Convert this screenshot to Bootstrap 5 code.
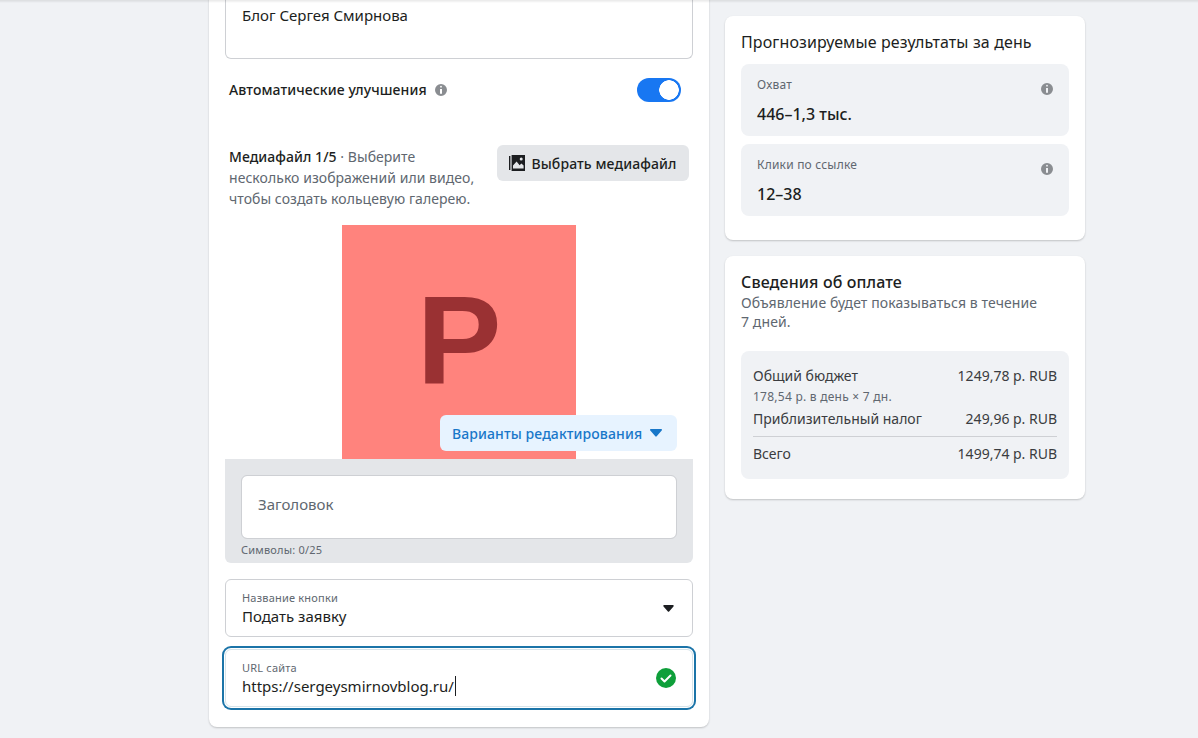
<!DOCTYPE html>
<html lang="ru">
<head>
    <meta charset="UTF-8">
    <title>Объявление</title>
    <link rel="stylesheet" href="https://cdn.jsdelivr.net/npm/bootstrap@5.3.0/dist/css/bootstrap.min.css">
    <style>
        html, body {
            height: 738px;
            overflow: hidden;
        }
        body {
            background: #f0f2f5;
            color: #1c1e21;
            font-family: "Noto Sans", "Open Sans", sans-serif;
            font-size: 14px;
            line-height: 20px;
        }
        .top-shade {
            position: fixed;
            top: 0;
            left: 0;
            right: 0;
            height: 3px;
            background: linear-gradient(rgba(0,0,0,.09), rgba(0,0,0,0));
            z-index: 5;
        }
        .page-wrap {
            display: flex;
            align-items: flex-start;
            gap: 16px;
            padding-left: 209px;
        }
        .panel {
            background: #fff;
            border-radius: 8px;
            box-shadow: 0 1px 2px rgba(0,0,0,.2);
        }
        .panel-main {
            width: 500px;
            height: 767px;
            margin-top: -40px;
            padding: 0 16px;
            flex: none;
        }
        .side-col {
            width: 360px;
            padding-top: 16px;
            flex: none;
        }
        .field-box {
            border: 1px solid #ced0d4;
            border-radius: 6px;
            padding: 0 16px;
            background: #fff;
            color: #1c1e21;
        }
        .name-box {
            height: 59px;
            margin-top: 40px;
            padding-top: 3px;
            font-size: 15px;
            line-height: 24px;
            border-top: 0;
            border-radius: 0 0 6px 6px;
        }
        .auto-row {
            height: 24px;
            margin: 19px 12px 0 4px;
        }
        .auto-title {
            font-weight: 500;
            font-size: 14px;
            letter-spacing: .1px;
        }
        .info-ico {
            width: 12px;
            height: 12px;
            fill: #8a8d91;
            flex: none;
        }
        .switch-big {
            width: 44px !important;
            height: 24px;
            margin: 0 !important;
            float: none !important;
            border: 0;
            background-color: #1877f2 !important;
            background-image: radial-gradient(circle 10px at 32px 12px, #fff 95%, transparent 100%) !important;
            background-size: 100% 100% !important;
            background-position: 0 0 !important;
            box-shadow: none !important;
        }
        .media-row {
            margin: 43px 4px 0 4px;
        }
        .media-note {
            width: 250px;
            color: #606770;
            line-height: 21px;
            padding-top: 1px;
            letter-spacing: .05px;
        }
        .media-note b {
            color: #1c1e21;
            font-weight: 500;
        }
        .btn-media {
            width: 192px;
            height: 36px;
            padding: 0;
            border: 0;
            border-radius: 6px;
            background: #e4e6e9;
            color: #1c1e21;
            font-size: 14px;
            font-weight: 500;
            letter-spacing: .1px;
            gap: 6px;
        }
        .media-ico {
            width: 16px;
            height: 16px;
            fill: #1c1e21;
        }
        .preview-wrap {
            position: relative;
            height: 234px;
            margin-top: 16px;
        }
        .preview-pic {
            display: block;
            width: 234px;
            height: 234px;
            margin: 0 auto;
            background: #ff837d;
            color: #9a3133;
            font: 700 127px/230px "Liberation Sans", sans-serif;
            text-align: center;
        }
        .btn-edit {
            position: absolute;
            left: 215px;
            top: 190px;
            width: 237px;
            height: 36px;
            padding: 0 0 0 12px;
            border: 0;
            border-radius: 6px;
            background: #e7f3ff;
            color: #1877c9;
            font-size: 14px;
            font-weight: 500;
            letter-spacing: .1px;
            gap: 8px;
        }
        .caret-ico {
            width: 12px;
            height: 8px;
            fill: currentColor;
        }
        .headline-area {
            height: 104px;
            padding: 16px 16px 0;
            background: #e4e6e9;
            border-radius: 0 0 6px 6px;
        }
        .headline-input {
            height: 64px;
            border-radius: 6px;
            border-color: #ced0d4;
            color: #606770;
            font-size: 15px;
            padding: 17px 16px;
        }
        .chars-note {
            margin-top: 3px;
            font-size: 11px;
            line-height: 16px;
            letter-spacing: .2px;
            color: #606770;
        }
        .float-box {
            height: 58px;
        }
        .float-text {
            padding-top: 10px;
        }
        .float-label {
            font-size: 11px;
            line-height: 16px;
            letter-spacing: .2px;
            color: #606770;
        }
        .float-value {
            font-size: 15px;
            line-height: 20px;
        }
        .select-caret {
            width: 11px;
            height: 7px;
            margin-right: 2px;
            fill: #1c1e21;
        }
        .focus-box {
            margin-top: 12px;
            box-shadow: 0 0 0 1px #fff, 0 0 0 3px #1b74a8;
            border-color: #d6e4ea;
        }
        .text-cursor {
            display: inline-block;
            width: 1px;
            height: 20px;
            margin-left: 1px;
            background: #1c1e21;
            vertical-align: -4px;
        }
        .ok-ico {
            width: 20px;
            height: 20px;
        }
        .panel-forecast {
            height: 224px;
            padding: 16px;
        }
        .panel-title {
            font-size: 16px;
            line-height: 20px;
            font-weight: 400;
            margin: 0;
            letter-spacing: .12px;
        }
        .title-strong {
            font-weight: 500;
        }
        .stat-tile {
            height: 72px;
            background: #f0f2f5;
            border-radius: 8px;
            padding: 11px 16px;
            margin-top: 8px;
        }
        .panel-title + .stat-tile {
            margin-top: 12px;
        }
        .stat-label {
            font-size: 12px;
            line-height: 20px;
            letter-spacing: .2px;
            color: #606770;
        }
        .stat-value {
            font-size: 16px;
            font-weight: 500;
            line-height: 20px;
            margin-top: 9px;
        }
        .panel-pay {
            height: 243px;
            margin-top: 16px;
            padding: 16px;
        }
        .pay-note {
            color: #606770;
            line-height: 19px;
            margin-top: 1px;
            letter-spacing: .1px;
        }
        .pay-table {
            height: 128px;
            margin-top: 20px;
            padding: 15px 12px 0;
            background: #f0f2f5;
            border-radius: 8px;
            color: #3a3c40;
        }
        .pay-sub {
            font-size: 12px;
            line-height: 16px;
            letter-spacing: .25px;
            margin: 3px 0 4px;
            color: #606770;
        }
        .pay-line {
            margin: 7px 0 7px;
            border-top: 1px solid #ced0d4;
        }
    </style>
</head>
<body>

<div class="top-shade"></div>

<div class="page-wrap">
    <div class="panel panel-main">
        <div class="field-box name-box">Блог Сергея Смирнова</div>

        <div class="auto-row d-flex align-items-center justify-content-between">
            <div class="d-flex align-items-center gap-2">
                <span class="auto-title">Автоматические улучшения</span>
                <svg class="info-ico" viewBox="0 0 12 12"><path fill-rule="evenodd" d="M6 0a6 6 0 1 0 0 12A6 6 0 0 0 6 0zm-.9 2.700a.9.9 0 1 1 1.800 0 .9.9 0 0 1-1.800 0zM5 5h2v4.800H5z"/></svg>
            </div>
            <div class="form-check form-switch m-0 p-0">
                <input class="form-check-input switch-big" type="checkbox" role="switch" checked>
            </div>
        </div>

        <div class="media-row d-flex justify-content-between align-items-start">
            <div class="media-note"><b>Медиафайл 1/5</b> · Выберите несколько изображений или видео, чтобы создать кольцевую галерею.</div>
            <button class="btn btn-media d-flex align-items-center justify-content-center" type="button">
                <svg class="media-ico" viewBox="0 0 16 16"><path d="M0 1h1.400v14H0zM2.600 0H16v16H2.600zm9.600 2.600a1.500 1.500 0 1 0 0 3 1.500 1.500 0 0 0 0-3zM4 13.600h10.600v-3l-2.200-2-1.800 1.600-3-3.600L4 10.400z" fill-rule="evenodd"/></svg>
                Выбрать медиафайл
            </button>
        </div>

        <div class="preview-wrap">
            <div class="preview-pic">P</div>
            <button class="btn btn-edit d-flex align-items-center" type="button">
                Варианты редактирования
                <svg class="caret-ico" viewBox="0 0 12 8"><path d="M1 0h10c.9 0 1.300 1 .7 1.600L6.700 7.300a1 1 0 0 1-1.400 0L.3 1.600C-.3 1 .1 0 1 0z"/></svg>
            </button>
        </div>

        <div class="headline-area">
            <div class="form-control headline-input">Заголовок</div>
            <div class="chars-note">Символы: 0/25</div>
        </div>

        <div class="field-box float-box d-flex align-items-center justify-content-between mt-3">
            <div class="float-text align-self-start">
                <div class="float-label">Название кнопки</div>
                <div class="float-value">Подать заявку</div>
            </div>
            <svg class="select-caret" viewBox="0 0 12 8"><path d="M1 0h10c.9 0 1.300 1 .7 1.600L6.700 7.300a1 1 0 0 1-1.400 0L.3 1.600C-.3 1 .1 0 1 0z"/></svg>
        </div>

        <div class="field-box float-box focus-box d-flex align-items-center justify-content-between">
            <div class="float-text align-self-start">
                <div class="float-label">URL сайта</div>
                <div class="float-value">https://sergeysmirnovblog.ru/<span class="text-cursor"></span></div>
            </div>
            <svg class="ok-ico" viewBox="0 0 20 20"><circle cx="10" cy="10" r="10" fill="#0e9f3a"/><path d="M5.500 10.500l3 3 6-6" fill="none" stroke="#fff" stroke-width="2" stroke-linecap="round" stroke-linejoin="round"/></svg>
        </div>
    </div>

    <div class="side-col">
        <div class="panel panel-forecast">
            <h2 class="panel-title">Прогнозируемые результаты за день</h2>
            <div class="stat-tile d-flex justify-content-between">
                <div>
                    <div class="stat-label">Охват</div>
                    <div class="stat-value">446–1,3 тыс.</div>
                </div>
                <svg class="info-ico mt-2" viewBox="0 0 12 12"><path fill-rule="evenodd" d="M6 0a6 6 0 1 0 0 12A6 6 0 0 0 6 0zm-.9 2.700a.9.9 0 1 1 1.800 0 .9.9 0 0 1-1.800 0zM5 5h2v4.800H5z"/></svg>
            </div>
            <div class="stat-tile d-flex justify-content-between">
                <div>
                    <div class="stat-label">Клики по ссылке</div>
                    <div class="stat-value">12–38</div>
                </div>
                <svg class="info-ico mt-2" viewBox="0 0 12 12"><path fill-rule="evenodd" d="M6 0a6 6 0 1 0 0 12A6 6 0 0 0 6 0zm-.9 2.700a.9.9 0 1 1 1.800 0 .9.9 0 0 1-1.800 0zM5 5h2v4.800H5z"/></svg>
            </div>
        </div>

        <div class="panel panel-pay">
            <h2 class="panel-title title-strong">Сведения об оплате</h2>
            <div class="pay-note">Объявление будет показываться в течение 7&nbsp;дней.</div>
            <div class="pay-table">
                <div class="d-flex justify-content-between"><span>Общий бюджет</span><span>1249,78 р. RUB</span></div>
                <div class="pay-sub">178,54 р. в день × 7 дн.</div>
                <div class="d-flex justify-content-between"><span>Приблизительный налог</span><span>249,96 р. RUB</span></div>
                <div class="pay-line"></div>
                <div class="d-flex justify-content-between"><span>Всего</span><span>1499,74 р. RUB</span></div>
            </div>
        </div>
    </div>
</div>

<script src="https://cdn.jsdelivr.net/npm/bootstrap@5.3.0/dist/js/bootstrap.bundle.min.js"></script>
</body>
</html>
